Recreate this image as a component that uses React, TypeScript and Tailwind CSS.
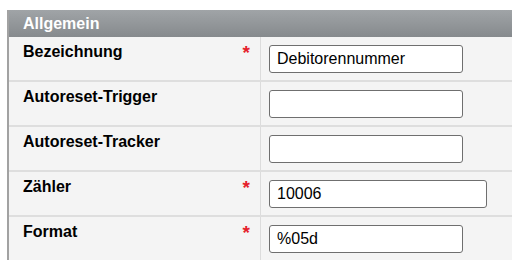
import React from "react";

type Field = {
  label: string;
  value: string;
  required: boolean;
  inputWidth: string;
};

const FIELDS: Field[] = [
  { label: "Bezeichnung", value: "Debitorennummer", required: true, inputWidth: "w-[194px]" },
  { label: "Autoreset-Trigger", value: "", required: false, inputWidth: "w-[194px]" },
  { label: "Autoreset-Tracker", value: "", required: false, inputWidth: "w-[194px]" },
  { label: "Zähler", value: "10006", required: true, inputWidth: "w-[218px]" },
  { label: "Format", value: "%05d", required: true, inputWidth: "w-[194px]" },
];

export default function App() {
  return (
    <div className="h-[260px] w-[512px] overflow-hidden bg-white pl-[7px] pt-[10px] font-['Liberation_Sans',Arial,sans-serif]">
      <div className="w-[520px] border-l-2 border-[#a2a2a2]">
        {/* Section header */}
        <div className="flex h-[27px] items-center bg-gradient-to-b from-[#a0a4a7] to-[#868a8d] pl-[14px] text-[16px] font-bold text-white">
          Allgemein
        </div>

        {/* Rows */}
        {FIELDS.map((f) => (
          <div
            key={f.label}
            className="grid h-[45px] grid-cols-[252px_1fr] border-b-2 border-[#dedede] bg-[#f4f4f4]"
          >
            <div className="flex items-start justify-between border-r border-[#dcdcdc] pl-[14px] pr-[10px] pt-[6px]">
              <span className="text-[16px] font-bold leading-[18px] text-black">
                {f.label}
              </span>
              {f.required && (
                <span className="mt-[1px] text-[19px] font-bold leading-[18px] text-[#e5202a]">
                  *
                </span>
              )}
            </div>
            <div className="pl-[8px] pt-[8px]">
              <input
                readOnly
                value={f.value}
                className={`${f.inputWidth} h-[28px] rounded-[3px] border border-[#6f6f6f] bg-white px-[7px] text-[16px] text-black outline-none`}
              />
            </div>
          </div>
        ))}
      </div>
    </div>
  );
}
